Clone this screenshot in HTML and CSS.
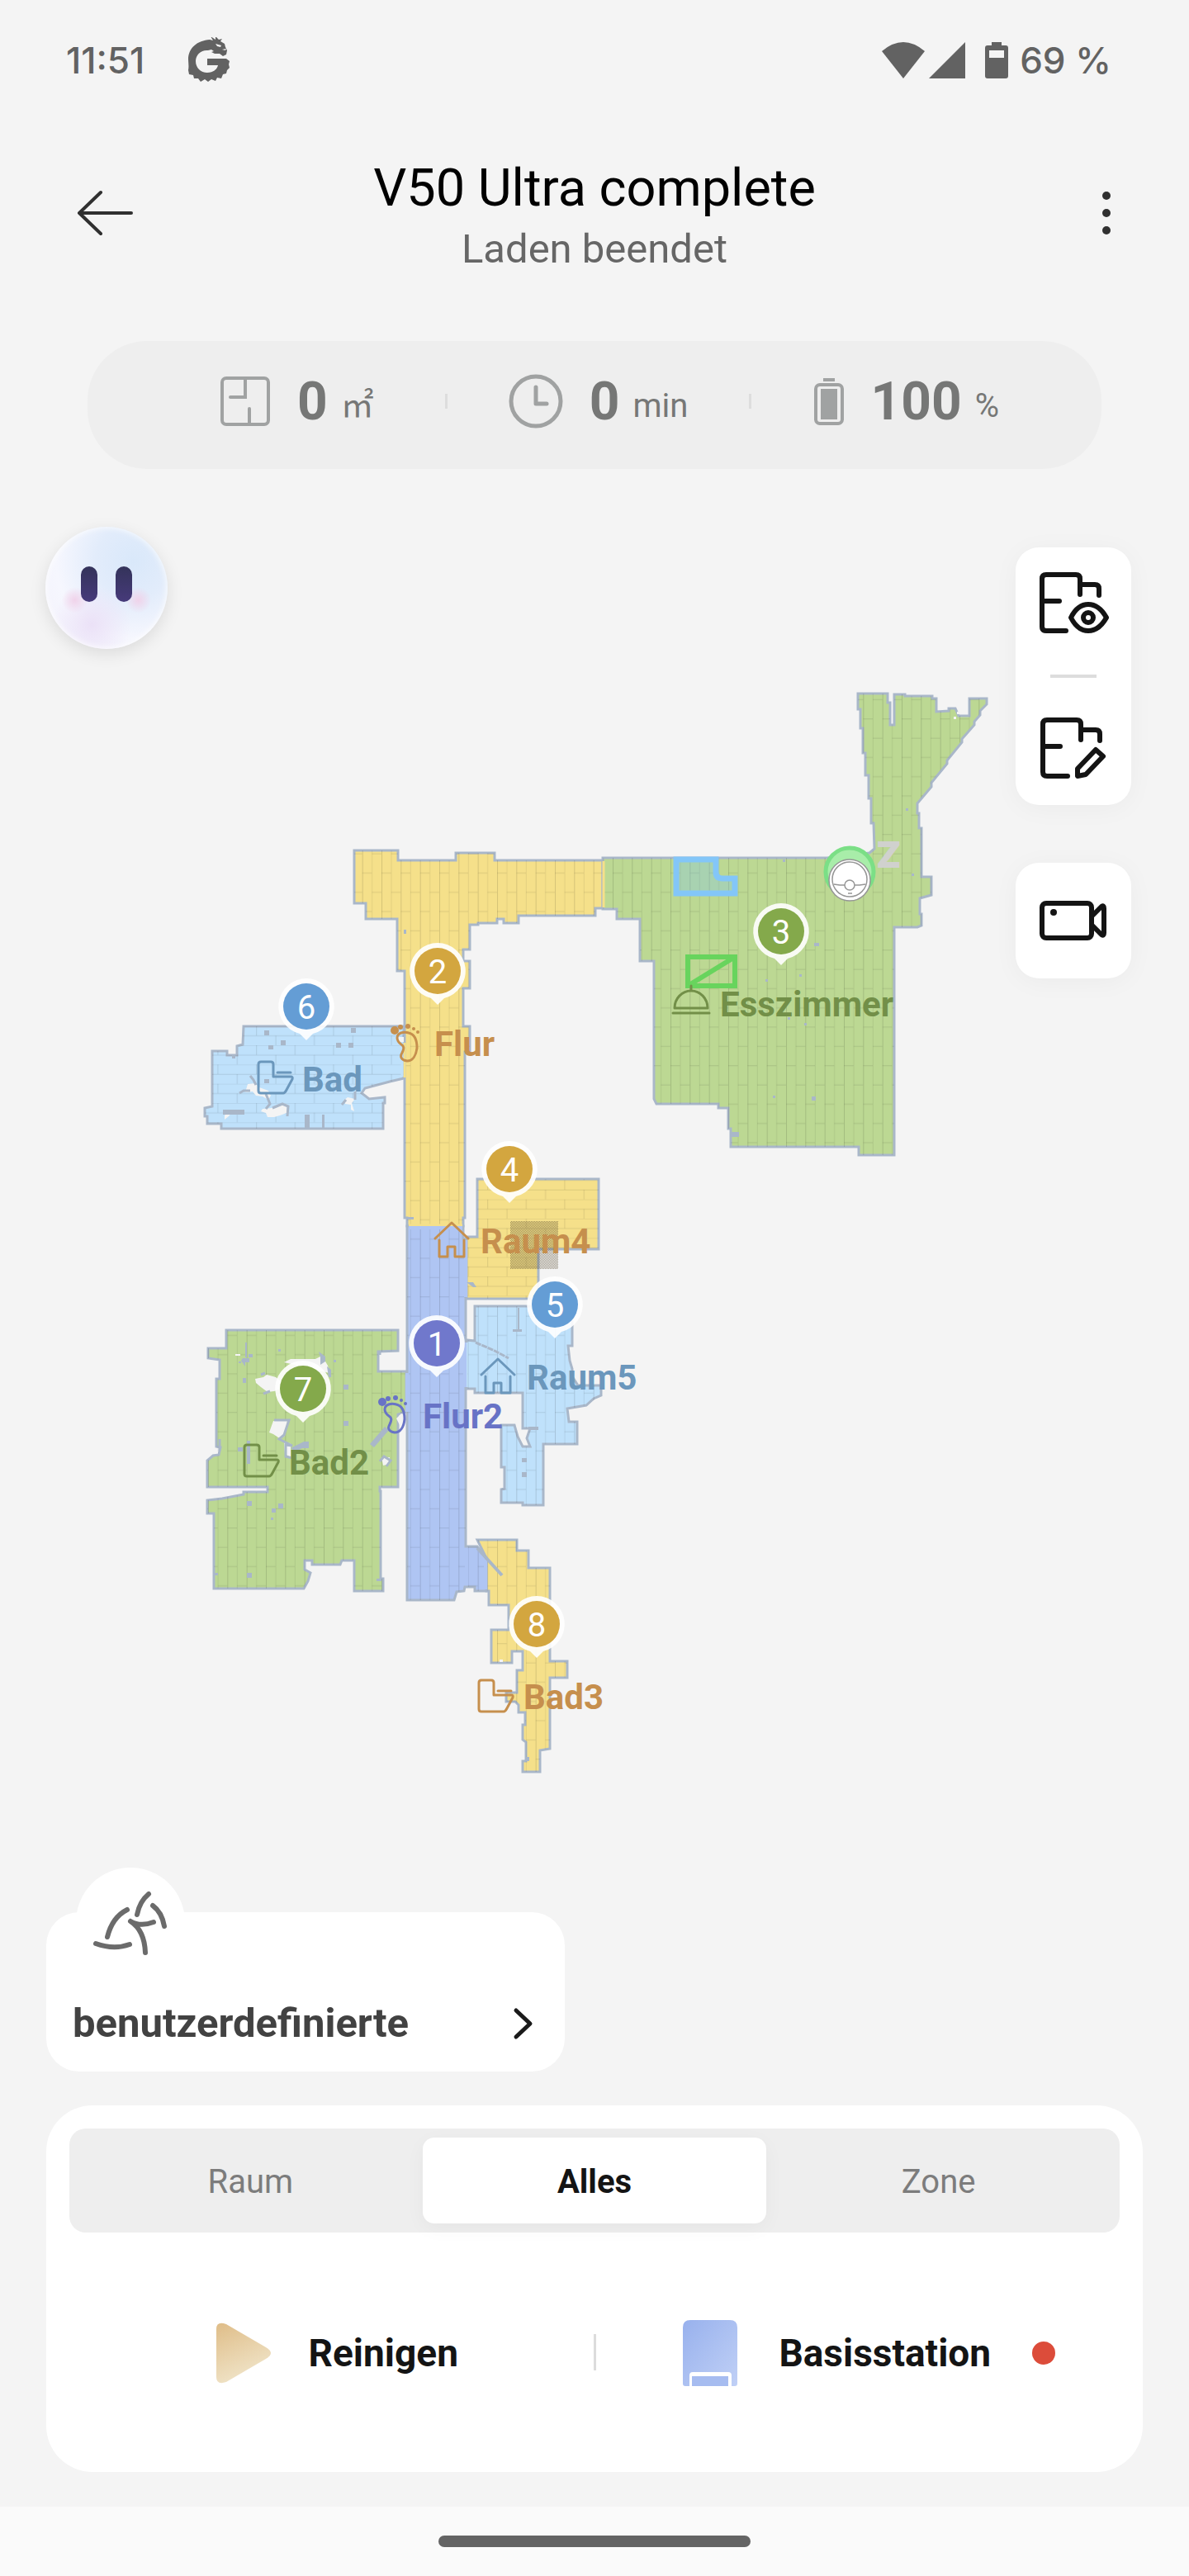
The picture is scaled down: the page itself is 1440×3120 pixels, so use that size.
FILE: index.html
```html
<!DOCTYPE html>
<html lang="de">
<head>
<meta charset="utf-8">
<meta name="viewport" content="width=device-width, initial-scale=1">
<title>V50 Ultra complete</title>
<link rel="stylesheet" href="styles.css">
</head>
<body>
<div class="status-bar">
  <div class="status-group">
    <span>11:51</span>
    <svg class="status-app" width="52" height="56" viewBox="0 0 52 56" aria-hidden="true">
      <path fill="#626262" d="M27 3l4 1-3-5 6 4 0-4 4 4 4-1-2 3 5 3 1 4 2 4-1 5-4 2-4-3-6 0-4-2 3-1-3-2-4 1C17 15 10 21 10 29c0 8 6 14 14 14 7 0 12-4 13-9H24v-8h23l4 3-1 4 1 4-3 3-1 4-4 1-2 5-5-1-2 4-5-2-4 3-4-3-5 3-3-4-5 0-1-4-5-1-1-5C2 35 1 31 1 27 1 13 12 4 27 3z"/>
      <path fill="#f4f4f4" d="M34 8l7 2-1 2-4-1zM42 15l5-1-1 2z"/>
    </svg>
  </div>
  <div class="status-group status-right">
    <svg width="54" height="46" viewBox="0 0 54 46" aria-hidden="true"><path fill="#626262" d="M1 12Q27-10 53 12L27 45z"/></svg>
    <svg width="44" height="46" viewBox="0 0 44 46" aria-hidden="true"><path fill="#626262" d="M44 1v44H0z"/></svg>
    <svg class="status-battery" width="28" height="46" viewBox="0 0 28 46" aria-hidden="true"><path fill="#626262" fill-rule="evenodd" d="M8 1h12v4h5q3 0 3 3v34q0 3-3 3H3q-3 0-3-3V8q0-3 3-3h5zM5 11v9h18v-9z"/></svg>
    <span>69 %</span>
  </div>
</div>

<header class="app-header">
  <button class="icon-button" type="button" aria-label="Zurück">
    <svg width="72" height="60" viewBox="0 0 72 60" fill="none" stroke="#303030" stroke-width="4" stroke-linecap="round" stroke-linejoin="round" aria-hidden="true"><path d="M30 5L4 30l26 25M4 30h63"/></svg>
  </button>
  <div class="heading">
    <h1>V50 Ultra complete</h1>
    <p>Laden beendet</p>
  </div>
  <button class="icon-button icon-button-end" type="button" aria-label="Mehr">
    <svg width="12" height="56" viewBox="0 0 12 56" fill="#303030" aria-hidden="true"><circle cx="6" cy="7" r="5"/><circle cx="6" cy="28" r="5"/><circle cx="6" cy="49" r="5"/></svg>
  </button>
</header>

<main>
  <section class="stats" aria-label="Reinigungsdaten">
    <div class="stat">
      <svg width="62" height="62" viewBox="0 0 62 62" fill="none" stroke="#a0a2a2" stroke-width="4" stroke-linecap="round" aria-hidden="true"><rect x="3" y="3" width="56" height="56" rx="5"/><path d="M31 3v23H13M36 40v19"/></svg>
      <strong>0</strong><span class="unit">㎡</span>
    </div>
    <i class="stat-divider"></i>
    <div class="stat">
      <svg width="66" height="66" viewBox="0 0 66 66" fill="none" stroke="#a0a2a2" stroke-width="5" stroke-linecap="round" stroke-linejoin="round" aria-hidden="true"><circle cx="33" cy="33" r="30"/><path d="M33 16v20h13"/></svg>
      <strong>0</strong><span class="unit">min</span>
    </div>
    <i class="stat-divider"></i>
    <div class="stat">
      <svg width="38" height="60" viewBox="0 0 38 60" fill="none" stroke="#a0a2a2" stroke-width="4" aria-hidden="true"><rect x="3" y="10" width="32" height="47" rx="5"/><path fill="#a0a2a2" stroke="none" d="M12 2h14v4H12zM9 15h20v37H9z"/></svg>
      <strong>100</strong><span class="unit">%</span>
    </div>
  </section>

  <section class="map-stage" aria-label="Karte">
    <svg class="map" viewBox="0 568 1440 1748" role="img" aria-label="Wohnungsplan">
      <defs>
        <!-- parquet laid top to bottom -->
        <pattern id="planks-v" patternUnits="userSpaceOnUse" x="56" y="90" width="70" height="140" patternTransform="scale(.33333)">
          <path d="M1 0V140" stroke="#000" stroke-opacity=".13" stroke-width="4"/>
          <path d="M36 0V140" stroke="#000" stroke-opacity=".07" stroke-width="3"/>
          <path d="M0 2H35M35 72H70" stroke="#000" stroke-opacity=".1" stroke-width="3"/>
        </pattern>
        <!-- parquet laid left to right -->
        <pattern id="planks-h" patternUnits="userSpaceOnUse" x="90" y="18" width="140" height="70" patternTransform="scale(.33333)">
          <path d="M0 1H140" stroke="#000" stroke-opacity=".08" stroke-width="3"/>
          <path d="M0 36H140" stroke="#000" stroke-opacity=".1" stroke-width="3"/>
          <path d="M2 0V35M72 35V70" stroke="#000" stroke-opacity=".1" stroke-width="3"/>
        </pattern>
        <pattern id="dither" patternUnits="userSpaceOnUse" width="2" height="2">
          <path d="M0 0h1v1H0zM1 1h1v1H1z" fill="#55492e" fill-opacity=".55"/>
        </pattern>
        <symbol id="pin" viewBox="0 0 76 84" overflow="visible">
          <path fill="#fff" fill-opacity=".9" d="M38 1a34 34 0 0 1 8 67l-8 8-8-8A34 34 0 0 1 38 1z"/>
          <circle cx="38" cy="35" r="28" fill="currentColor"/>
        </symbol>
        <symbol id="toilet" viewBox="0 0 46 42">
          <path d="M5 2h12q3 0 3 3v15h21q3 0 2 3l-7 13q-2 4-4 4H5q-3 0-3-3V5q0-3 3-3zM25 15h16"/>
        </symbol>
        <symbol id="house" viewBox="0 0 44 46">
          <path d="M2 21L22 2l20 19M7 23v20h10V31h9v12h11V23"/>
        </symbol>
        <symbol id="foot" viewBox="0 0 38 48">
          <g fill="currentColor" stroke="none"><circle cx="5" cy="8" r="5"/><circle cx="12" cy="4" r="3"/><circle cx="21" cy="3" r="3"/><circle cx="28" cy="6" r="2"/><circle cx="33" cy="10" r="2"/></g>
          <path d="M8 17C8 11 16 9 22 11c8 2 10 9 10 18-1 9-5 16-12 16-7-1-9-5-6-10 3-6 2-8-1-10-4-3-5-5-5-8z"/>
        </symbol>
      </defs>

      <g class="rooms">
        <path fill="#f5e08a" d="M429 1030H482V1042H552V1033H599V1042H730V1100H721V1109H628V1118H610V1113H602V1118H579V1120H569V1150H561V1164H569V1197H561V1243H569V1274H563V1475H561V1485H493V1475H490V1176H481V1113H443V1094H429z"/>
        <path fill="#bcd893" d="M730 1039H1002L1053 1033 1059 1028 1058 997H1055V967H1052V939H1048V912H1045V882H1042V859H1039V840H1075V851H1078V878H1083V841H1096V843H1129V846H1134V862L1149 861V858H1157L1161 867H1174V846H1195V853L1187 861V866L1180 874V878L1165 895V899L1147 921V925L1128 948V953L1111 973V985H1113V1003H1116V1062H1128V1084L1114 1088V1107H1116V1121L1111 1123H1083V1399H1040V1389H885V1367H882V1342H870V1337H795L792 1331V1164H775V1113H747V1101H730z"/>
        <path fill="#bfe1fb" d="M575 1582H693V1630H688L690 1648 693 1658V1667L700 1678H728V1690L719 1694 710 1702 687 1706 689 1722H699V1749H658V1823H633V1820H607V1804L611 1803V1777H607V1726H623L627 1740 633 1752H642L638 1742 642 1730H633V1687H575V1682H565V1623L575 1624z"/>
        <path fill="#bcd893" d="M274 1611H482V1636L458 1637V1661H492V1710L482 1713V1801H460V1806H461V1912H464V1927H429V1890H414L412 1895H378V1890H369V1901L376 1905 373 1915 368 1924H259V1833H251V1817L269 1815 295 1810V1807H324V1801H251V1769L258 1763 265 1762 267 1753 262 1752V1670H266V1647L252 1645V1633H274z"/>
        <path fill="#f5e08a" d="M578 1865H626V1878H640V1899H666V2012H687V2032H666V2118L654 2120V2146H633V2133H637V2110L633 2107V2089H636V2074H628V2065L624 2061H613V2050H626V2023H633V2000H620V2014H595V1974H616V1944H592V1927H589V1887z"/>
        <path fill="#afc5f3" d="M493 1485H561V1500H564V1873H578L589 1887V1927H575V1922H563L562 1927 553 1928 550 1938H493z"/>
        <path fill="#bfe1fb" d="M295 1243H489V1306L472 1310 442 1318 438 1324 447 1331 466 1329V1336H464V1367H268V1361H251V1352H248V1342L257 1340V1273H275V1278H287V1267L294 1265z"/>
        <path fill="#f5e08a" d="M578 1428H725V1513H652V1573H565V1498H578z"/>
      </g>
      <!-- parquet over the floors -->
      <path fill="url(#planks-v)" d="M429 1030H482V1042H552V1033H599V1042H730V1100H721V1109H628V1118H610V1113H602V1118H579V1120H569V1150H561V1164H569V1197H561V1243H569V1274H563V1475H561V1485H493V1475H490V1176H481V1113H443V1094H429z"/>
      <path fill="url(#planks-v)" d="M730 1039H1002L1053 1033 1059 1028 1058 997H1055V967H1052V939H1048V912H1045V882H1042V859H1039V840H1075V851H1078V878H1083V841H1096V843H1129V846H1134V862L1149 861V858H1157L1161 867H1174V846H1195V853L1111 973V985H1113V1003H1116V1062H1128V1084L1114 1088V1107H1116V1121L1111 1123H1083V1399H1040V1389H885V1367H882V1342H870V1337H795L792 1331V1164H775V1113H747V1101H730z"/>
      <path fill="url(#planks-v)" d="M575 1582H693V1630H688L690 1648 693 1658V1667L700 1678H728V1690L710 1702 687 1706 689 1722H699V1749H658V1823H633V1820H607V1726H623L627 1740 633 1752H642L638 1742 642 1730H633V1687H575V1682H565V1623L575 1624z"/>
      <path fill="url(#planks-v)" d="M274 1611H482V1636L458 1637V1661H492V1710L482 1713V1801H461V1912H464V1927H429V1890H414L412 1895H378V1890H369V1901L376 1905 368 1924H259V1833H251V1817L295 1810V1807H324V1801H251V1769L265 1762 262 1752V1670H266V1647L252 1645V1633H274z"/>
      <path fill="url(#planks-v)" d="M578 1865H626V1878H640V1899H666V2012H687V2032H666V2118L654 2120V2146H633V2133H637V2110L633 2107V2089H636V2074H628V2065L624 2061H613V2050H626V2023H633V2000H620V2014H595V1974H616V1944H592V1927H589V1887z"/>
      <path fill="url(#planks-v)" d="M493 1485H561V1500H564V1873H578L589 1887V1927H575V1922H563L562 1927 553 1928 550 1938H493z"/>
      <path fill="url(#planks-h)" d="M295 1243H489V1306L442 1318 438 1324 447 1331 466 1329V1336H464V1367H268V1361H251V1352H248V1342L257 1340V1273H275V1278H287V1267L294 1265zM578 1428H725V1513H652V1573H565V1498H578z"/>

      <!-- doorways: no wall between neighbouring rooms -->
      <path fill="none" stroke="#f5e08a" stroke-width="3" d="M731 1043V1099M490 1263V1305M495 1484H560"/>
      <path fill="none" stroke="#bfe1fb" stroke-width="3" d="M565 1626V1680M487 1256V1304"/>
      <path fill="none" stroke="#afc5f3" stroke-width="4" d="M493 1663V1710M564 1502V1571M563 1626V1680M565 1876V1920M588 1889V1925M495 1487H560"/>

      <!-- areas the robot has not seen -->
      <g fill="#f4f4f4">
        <path d="M300 1313l9-1 5 5 11 4 3 6-3 5-7-4-8-1-4-5-9 1zM318 1343l11-1 14-6 5 2-1 10-8 3-7 2h-8l-2-5-6-2zM416 1333l5-4 9 2-4 5 3 10-4-2v-6l-7-1zM272 1351l4-4h5l-4 5-5 4z"/>
        <path d="M309 1670l10-2 4-3 11 3 6 5v9l-8 3-8 1-8-6-6-5zM344 1650l8-4h30l8-4 7 12 2 9-8-2zM331 1721h17l-3 18-5 4-9-6-5-2zM344 1747l8 1v17l-7-4zM462 1765h10v8l-8 2zM285 1640h6v2h-6zM294 1645h7v3h-7zM486 1712l5 2v10l-7 2-4-8z"/>
        <path d="M1155 868h3v3h-3zM1159 862h3v3h-3zM605 2010h4v3h-4z"/>
        <path d="M480 1256h9v6h-8z"/>
      </g>

      <!-- obstacles and loose wall pixels -->
      <g fill="#a9b7c9">
        <path d="M320 1248h6v6h-6zM340 1260h6v6h-6zM325 1266h6v5h-6zM425 1245h6v6h-6zM407 1263h6v6h-6zM422 1263h6v6h-6zM320 1307h6v5h-6zM369 1350h6v17h-6zM390 1350h3v17h-3zM270 1344h26v6h-26zM281 1278h4v4h-4z"/>
        <path d="M294 1645h8v5h-5v5l-5-7zM297 1626h2v18h-2zM289 1649h3v2h-3zM301 1640h5v4h-5zM294 1669h4v6h-4zM337 1634h3v3h-3zM404 1647h3v3h-3zM416 1677h6v6h-6zM416 1721h6v6h-6zM386 1637l8 6v6l-6 4v-9zM396 1655l5 4v9h-3zM368 1746h6v8h-8l-8 4-6-4zM299 1745h4v28h-4zM288 1753h6v5h-6zM299 1818h6v6h-6zM337 1821h6v6h-6zM329 1827h5v5h-5zM328 1838h3v3h-3zM299 1905h6v6h-6zM260 1905h4v3h-4zM448 1749l18-21 5 4-18 21zM456 1912h6v3h-6z"/>
        <path d="M986 1142h6v4h-6zM930 1151h3v3h-3zM968 1180h3v3h-3zM927 1186h3v3h-3zM954 1232h3v3h-3zM974 1239h3v3h-3zM936 1327h3v3h-3zM983 1328h5v5h-5zM886 1371h9v6h-9zM1097 979h3v3h-3zM948 1041h3v3h-3zM1104 1058h3v3h-3zM489 1126h3v5h-3z"/>
        <path d="M632 1766h6v5h-6zM632 1783h6v6h-6zM621 1610h11v3h-11zM627 1584h2v28h-2zM565 1553h8l4 6h-4zM494 1474h7v3h-7zM640 1728h12v4h-12zM637 2128h4v5h-4z"/>
      </g>
      <g fill="none" stroke="#a9b7c9" stroke-width="3">
        <path d="M576 1626l21 9 19 10" stroke-dasharray="7 1"/>
        <path d="M578 1875l30 33" stroke-width="4"/>
        <path d="M303 1303l4 5 3 6M290 1324l5-3h8M322 1325l5 12-5 6M330 1342l12-5 7 3-1 12M414 1338l5-6M430 1322v10M332 1720h18l-6 18-6 5 16 8-8-1v14l8 2M316 1665l5-2M460 1637v4M319 1688l8-3M460 1770l5-6 8 5-5 7M266 1743v14"/>
      </g>
      <rect x="618" y="1479" width="58" height="58" fill="url(#dither)"/>

      <!-- no-go zone, carpet, dock -->
      <path d="M819 1041H867V1056Q867 1064 875 1064H890V1082H819z" fill="#7cc4f8" fill-opacity=".3" stroke="#83c6f8" stroke-width="7"/>
      <path d="M833 1159H890V1194H833zM833 1194L890 1159" fill="none" stroke="#68d45d" stroke-width="6"/>
      <circle cx="1029" cy="1056" r="29" fill="#a8eda9" stroke="#7bdf86" stroke-width="5"/>
      <g fill="#fff" stroke="#969696" stroke-width="1.5">
        <circle cx="1029" cy="1066" r="25"/><circle cx="1029" cy="1065" r="21"/>
        <path d="M1010 1071l7 1h24l7-1"/><circle cx="1029" cy="1072" r="6"/><path d="M1027 1082h5"/>
      </g>
      <text class="sleep" x="1061" y="1051">Z</text>

      <g class="room-tag tag-yellow"><use href="#foot" x="473" y="1240" width="38" height="48"/><text x="526" y="1279">Flur</text>
        <use href="#house" x="525" y="1479" width="44" height="46"/><text x="582" y="1518">Raum4</text>
        <use href="#toilet" x="578" y="2033" width="46" height="42"/><text x="634" y="2070">Bad3</text></g>
      <g class="room-tag tag-blue"><use href="#toilet" x="311" y="1284" width="46" height="42"/><text x="366" y="1322">Bad</text>
        <use href="#house" x="581" y="1644" width="44" height="46"/><text x="638" y="1683">Raum5</text></g>
      <g class="room-tag tag-green"><use href="#toilet" x="294" y="1748" width="46" height="42"/><text x="350" y="1786">Bad2</text>
        <path d="M817 1221a20 21 0 0 1 40 0zM837 1199v-5M815 1227h44"/><text x="872" y="1231">Esszimmer</text></g>
      <g class="room-tag tag-violet"><use href="#foot" x="458" y="1690" width="38" height="48"/><text x="512" y="1730">Flur2</text></g>

      <g class="pins">
        <g color="#7078cc"><use href="#pin" x="491" y="1592" width="76" height="84"/><text x="529" y="1642">1</text></g>
        <g color="#d3a63f"><use href="#pin" x="492" y="1141" width="76" height="84"/><text x="530" y="1191">2</text></g>
        <g color="#84a94b"><use href="#pin" x="908" y="1093" width="76" height="84"/><text x="946" y="1143">3</text></g>
        <g color="#d3a63f"><use href="#pin" x="579" y="1381" width="76" height="84"/><text x="617" y="1431">4</text></g>
        <g color="#649dd5"><use href="#pin" x="634" y="1545" width="76" height="84"/><text x="672" y="1595">5</text></g>
        <g color="#649dd5"><use href="#pin" x="333" y="1184" width="76" height="84"/><text x="371" y="1234">6</text></g>
        <g color="#84a94b"><use href="#pin" x="329" y="1647" width="76" height="84"/><text x="367" y="1697">7</text></g>
        <g color="#d3a63f"><use href="#pin" x="612" y="1932" width="76" height="84"/><text x="650" y="1982">8</text></g>
      </g>
    </svg>

    <button class="assistant" type="button" aria-label="Assistent">
      <span class="eye"></span><span class="eye"></span>
    </button>

    <div class="map-tools">
      <div class="tool-card tool-card-double">
        <button class="tool" type="button" aria-label="Kartenansicht">
          <svg width="88" height="80" viewBox="0 0 88 80" aria-hidden="true"><path d="M6 37h21M35 73H11q-5 0-5-5V10q0-5 5-5h36q5 0 5 5v19M52 17h18q5 0 5 5v8"/><path d="M41 57q8-16 21-16t22 16q-9 16-22 16T41 57z"/><circle cx="62" cy="57" r="6"/></svg>
        </button>
        <i class="tool-divider"></i>
        <button class="tool" type="button" aria-label="Karte bearbeiten">
          <svg width="88" height="80" viewBox="0 0 88 80" aria-hidden="true"><path d="M7 37h21M37 73H12q-5 0-5-5V10q0-5 5-5h36q5 0 5 5v19M53 17h18q5 0 5 5v8"/><path d="M71 41l9 8-21 22-10 2v-9z"/></svg>
        </button>
      </div>
      <div class="tool-card tool-card-single">
        <button class="tool" type="button" aria-label="Kamera">
          <svg width="88" height="52" viewBox="0 0 88 52" aria-hidden="true"><rect x="6" y="5" width="60" height="42" rx="5"/><path d="M67 20l11-11q3-2 3 2v30q0 4-3 2L67 32"/><circle cx="20" cy="16" r="4" fill="#141414" stroke="none"/></svg>
        </button>
      </div>
    </div>
  </section>

  <button class="mode-card" type="button">
    <svg class="mode-icon" width="100" height="84" viewBox="0 0 100 84" fill="none" stroke="#6b6b6b" stroke-width="6" stroke-linecap="round" aria-hidden="true"><path d="M47 25Q29 34 23 58M9 66q22 8 41 1M73 6Q62 15 59 31M78 20q11 8 14 25M51 39q12 7 28 1M51 39Q68 50 69 77"/></svg>
    <span>benutzerdefinierte</span>
    <svg width="28" height="44" viewBox="0 0 28 44" fill="none" stroke="#1a1a1a" stroke-width="5" stroke-linecap="round" stroke-linejoin="round" aria-hidden="true"><path d="M5 6l17 16L5 38"/></svg>
  </button>

  <section class="panel">
    <div class="segments" role="tablist">
      <button type="button" role="tab" aria-selected="false">Raum</button>
      <button type="button" role="tab" aria-selected="true">Alles</button>
      <button type="button" role="tab" aria-selected="false">Zone</button>
    </div>
    <div class="actions">
      <button class="action action-start" type="button">
        <svg width="66" height="74" viewBox="0 0 66 74" aria-hidden="true"><defs><linearGradient id="sand" x1="0" y1="0" x2=".4" y2="1"><stop offset="0" stop-color="#dfbd88"/><stop offset="1" stop-color="#f0e4c8"/></linearGradient></defs><path fill="url(#sand)" d="M0 8Q0-2 12 2L60 30Q72 37 60 44L12 72Q0 76 0 66z"/></svg>
        <span>Reinigen</span>
      </button>
      <i class="action-divider"></i>
      <button class="action action-station" type="button">
        <svg width="66" height="80" viewBox="0 0 66 80" aria-hidden="true"><defs><linearGradient id="sky" x1="0" y1="0" x2="1" y2="1"><stop offset="0" stop-color="#98b1ed"/><stop offset="1" stop-color="#c0d0f6"/></linearGradient></defs><path fill="url(#sky)" d="M9 0h48q9 0 9 9v68q0 3-3 3h-4V67q0-4-4-4H12q-4 0-4 4v13H3q-3 0-3-3V9q0-9 9-9z"/><path fill="#a6bcf0" d="M11 68h44v12H11z"/></svg>
        <span>Basisstation</span>
        <i class="badge"></i>
      </button>
    </div>
  </section>
</main>

<footer class="gesture-bar"><span></span></footer>
</body>
</html>
```
FILE: styles.css
```css
* { box-sizing: border-box; }

body {
  margin: 0;
  min-height: 100vh;
  display: flex;
  flex-direction: column;
  background: #f4f4f4;
  color: #141414;
  font-family: Roboto, "Noto Sans CJK SC", sans-serif;
}

button {
  margin: 0;
  padding: 0;
  border: 0;
  background: none;
  color: inherit;
  font: inherit;
  cursor: pointer;
}

svg { display: block; flex: none; }

/* system status bar */
.status-bar {
  height: 146px;
  padding: 0 94px 0 80px;
  display: flex;
  align-items: center;
  justify-content: space-between;
  color: #626262;
  font: 500 44px/56px Inter, sans-serif;
}
.status-group { display: flex; align-items: center; gap: 52px; }
.status-right { gap: 4px; }
.status-battery { margin: 0 10px 0 20px; }

/* title */
.app-header {
  padding: 44px 92px 0;
  display: grid;
  grid-template-columns: 80px 1fr 80px;
  align-items: center;
}
.icon-button { display: flex; height: 80px; padding-bottom: 4px; align-items: center; }
.icon-button-end { justify-content: flex-end; padding-right: 2px; }
.heading { text-align: center; }
.heading h1 {
  margin: 0 0 8px;
  font-size: 63px;
  font-weight: 400;
  line-height: 76px;
  color: #000;
}
.heading p { margin: 0; font-size: 49px; line-height: 56px; color: #666; }

/* cleaning figures */
.stats {
  margin: 83px 106px 0;
  height: 155px;
  padding: 0 124px 10px 160px;
  display: flex;
  align-items: center;
  justify-content: space-between;
  border-radius: 72px;
  background: #eee;
}
.stat { display: flex; align-items: center; color: #767776; }
.stat:first-child { margin-right: 12px; }
.stat strong { margin: 3px 0 0 32px; font-size: 64px; line-height: 76px; font-weight: 700; }
.unit { margin: 12px 0 0 16px; font-size: 40px; line-height: 48px; }
.stat-divider { width: 3px; height: 18px; background: #ddd; }

/* floor plan */
.map-stage { position: relative; }
.map { width: 100%; height: auto; }
.rooms path { stroke: #a9b7c9; stroke-width: 3; }
.room-tag { fill: none; stroke: currentColor; stroke-width: 3; stroke-linecap: round; stroke-linejoin: round; }
.room-tag text { fill: currentColor; stroke: none; font-size: 42px; font-weight: 700; }
.tag-yellow { color: #c68f4d; }
.tag-blue { color: #6b97bc; }
.tag-green { color: #728f48; }
.tag-violet { color: #6873c6; }
.pins text { fill: #fff; font-size: 40px; text-anchor: middle; }
.sleep { fill: #d0d1ce; font: 900 44px Inter, sans-serif; }

.assistant {
  position: absolute;
  top: 70px;
  left: 55px;
  width: 148px;
  height: 148px;
  padding-bottom: 10px;
  display: flex;
  justify-content: center;
  align-items: center;
  gap: 22px;
  border-radius: 50%;
  background:
    radial-gradient(circle at 24% 60%, #f0d3ea 0, #f0d3ea00 11%),
    radial-gradient(circle at 76% 60%, #f0d3ea 0, #f0d3ea00 11%),
    radial-gradient(circle at 38% 80%, #ebe1f7 0, #ebe1f700 32%),
    radial-gradient(circle at 72% 28%, #d9e8fa 0, #e2ecfb 30%, #f6f7fe 62%, #f2f0fc 100%);
  box-shadow: 0 6px 20px #0000001a, inset 0 0 8px #fff;
}
.eye { width: 20px; height: 43px; border-radius: 10px; background: linear-gradient(#34335a, #463a7a); }

.map-tools { position: absolute; top: 95px; right: 70px; width: 140px; display: grid; gap: 70px; }
.tool-card {
  display: flex;
  flex-direction: column;
  align-items: center;
  justify-content: space-between;
  border-radius: 28px;
  background: #fff;
  box-shadow: 0 4px 32px #0000000a;
}
.tool-card-double { height: 312px; padding: 28px 0; }
.tool-card-single { height: 140px; justify-content: center; }
.tool { width: 140px; display: flex; justify-content: center; }
.tool svg { fill: none; stroke: #141414; stroke-width: 6; stroke-linecap: round; stroke-linejoin: round; }
.tool-divider { width: 56px; height: 4px; background: #ddd; }

/* cleaning mode */
.mode-card {
  position: relative;
  width: 628px;
  height: 193px;
  margin-left: 56px;
  padding: 76px 36px 0 32px;
  display: flex;
  align-items: center;
  justify-content: space-between;
  border-radius: 40px;
  background: #fff;
  color: #424242;
  font-size: 49px;
  line-height: 56px;
  font-weight: 700;
}
.mode-card::before {
  content: "";
  position: absolute;
  top: -54px;
  left: 36px;
  width: 132px;
  height: 132px;
  border-radius: 50%;
  background: #fff;
}
.mode-icon { position: absolute; top: -28px; left: 51px; }

/* bottom controls */
.panel {
  margin: 41px 56px 42px;
  padding: 28px 28px 0;
  border-radius: 56px;
  background: #fff;
}
.segments {
  display: grid;
  grid-template-columns: repeat(3, 1fr);
  height: 126px;
  padding: 11px;
  border-radius: 20px;
  background: #eee;
}
.segments button { padding-top: 4px; border-radius: 14px; font-size: 40px; line-height: 48px; color: #7c7c7c; }
.segments [aria-selected="true"] {
  background: #fff;
  color: #141414;
  font-weight: 700;
  box-shadow: 0 6px 24px #0000000a;
}
.actions { display: grid; grid-template-columns: 1fr 3px 1fr; align-items: center; height: 290px; }
.action {
  display: flex;
  align-items: center;
  justify-content: center;
  gap: 50px;
  height: 120px;
  padding-top: 2px;
  font-size: 46px;
  line-height: 56px;
  font-weight: 700;
}
.action-start { gap: 46px; padding-left: 14px; }
.action-station { padding-left: 28px; }
.action-divider { height: 44px; background: #dcdcdc; }
.badge { width: 28px; height: 28px; border-radius: 50%; background: #dc4c3a; }

.gesture-bar {
  flex: 1;
  min-height: 84px;
  display: flex;
  align-items: center;
  justify-content: center;
  background: #fafafa;
}
.gesture-bar span { width: 378px; height: 14px; border-radius: 7px; background: #646464; }
```
